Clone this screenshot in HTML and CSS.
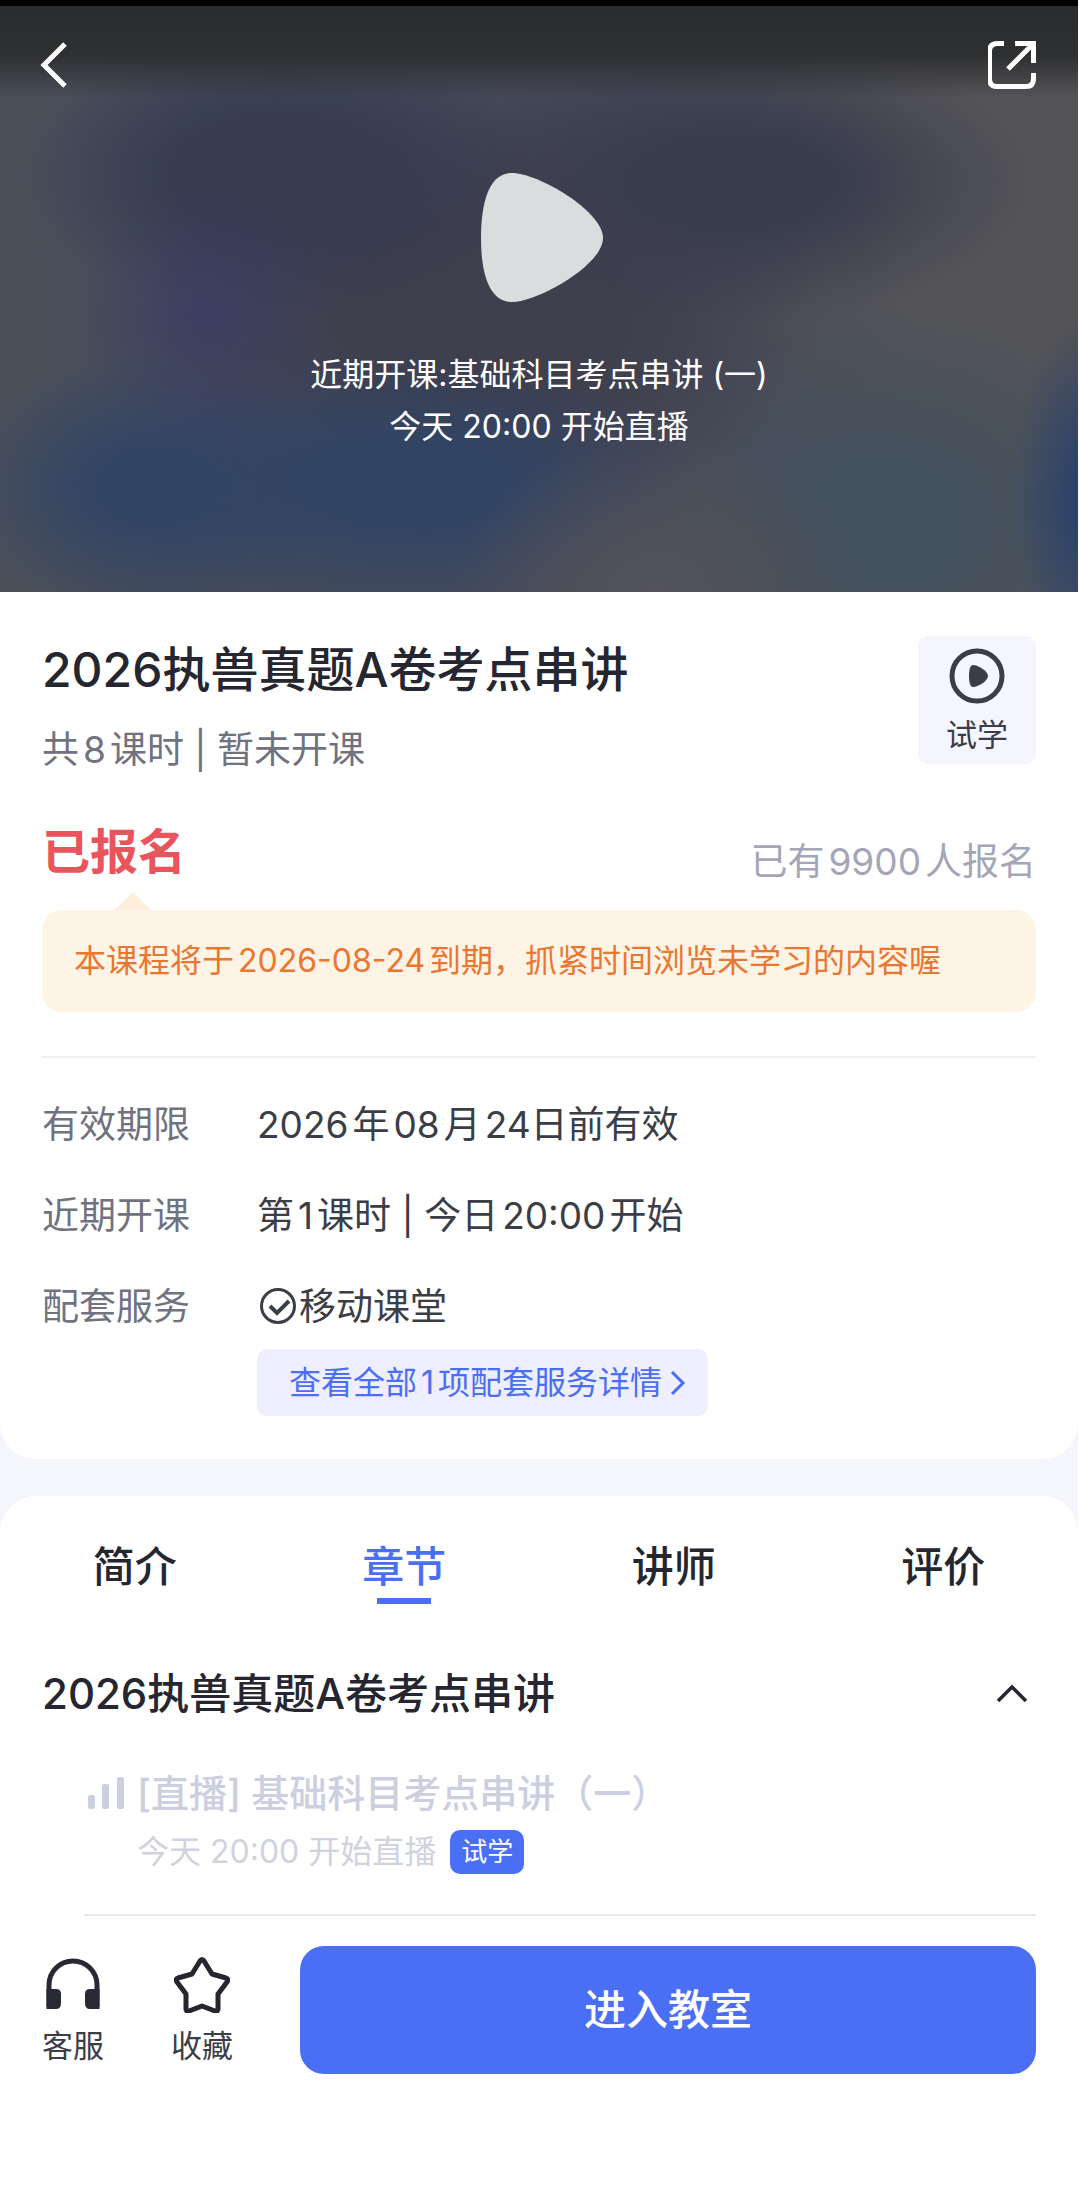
FILE: index.html
```html
<!DOCTYPE html>
<html lang="zh-CN">
<head>
<meta charset="utf-8">
<meta name="viewport" content="width=device-width, initial-scale=1">
<title>2026执兽真题A卷考点串讲</title>
<link rel="stylesheet" href="styles.css">
</head>
<body>
<div class="page">
  <header class="hero">
    <nav class="hero-nav">
      <button class="icon-button" type="button" aria-label="返回">
        <svg width="28" height="48" viewBox="0 0 28 48" fill="none" stroke="#fff" stroke-width="5"><path d="M25 3 4 24l21 21"/></svg>
      </button>
      <button class="icon-button" type="button" aria-label="分享">
        <svg width="50" height="48" viewBox="0 0 50 48" fill="none" stroke="#fff" stroke-width="5"><path d="M16 2.500h-6Q1.500 2.500 1.500 10v28q0 7.500 7.500 7.500h29q7.500 0 7.500-7.500v-6M27 2.500h18.500V22M45 3 20 28"/></svg>
      </button>
    </nav>
    <button class="icon-button play" type="button" aria-label="播放">
      <svg width="122" height="129" viewBox="0 0 122 129" fill="#dadcde"><path d="M31 0C57 0 122 38 122 65S57 129 31 129C7 129 0 98 0 65S7 0 31 0Z"/></svg>
    </button>
    <p class="hero-text">近期开课:基础科目考点串讲 (一)<br>今天 20:00 开始直播</p>
  </header>

  <main class="content">
    <section class="summary">
      <div class="summary-head">
        <div>
          <h1 class="title">2026执兽真题A卷考点串讲</h1>
          <p class="subtitle">共<span class="num">8</span>课时 | 暂未开课</p>
        </div>
        <button class="trial" type="button">
          <svg width="56" height="56" viewBox="0 0 56 56"><circle cx="28" cy="28" r="25" fill="none" stroke="#3b3d47" stroke-width="5"/><path d="M24 17c5 0 15 6 15 11s-10 11-15 11c-3 0-4-5-4-11s1-11 4-11Z" fill="#3b3d47"/></svg>
          试学
        </button>
      </div>
      <div class="status">
        <strong class="enrolled">已报名</strong>
        <span class="count">已有<span class="num">9900</span>人报名</span>
      </div>
      <p class="notice">本课程将于<span class="num">2026-08-24</span>到期，抓紧时间浏览未学习的内容喔</p>
      <dl class="details">
        <dt>有效期限</dt>
        <dd>2026<span class="num">年</span>08<span class="num">月</span>24日前有效</dd>
        <dt>近期开课</dt>
        <dd>第<span class="num">1</span>课时 | 今日<span class="num">20:00</span>开始</dd>
        <dt>配套服务</dt>
        <dd>
          <span class="service"><svg width="42" height="38" viewBox="0 0 42 38" fill="none" stroke="#3b3d47" stroke-width="3"><circle cx="21" cy="18" r="16.500"/><path d="m13 18 7 7 12-12" stroke-width="4"/></svg>移动课堂</span>
          <a class="more" href="#services"><span>查看全部<span class="num">1</span>项配套服务详情</span><svg width="16" height="26" viewBox="0 0 16 26" fill="none" stroke="#4a6ff5" stroke-width="3"><path d="m2 2 11 11L2 24"/></svg></a>
        </dd>
      </dl>
    </section>

    <section class="chapters">
      <div class="tabs" role="tablist">
        <button class="tab" type="button" role="tab">简介</button>
        <button class="tab active" type="button" role="tab" aria-selected="true">章节</button>
        <button class="tab" type="button" role="tab">讲师</button>
        <button class="tab" type="button" role="tab">评价</button>
      </div>
      <div class="chapter-head">
        <h2 class="chapter-title">2026执兽真题A卷考点串讲</h2>
        <button class="icon-button" type="button" aria-label="收起">
          <svg width="44" height="24" viewBox="0 0 44 24" fill="none" stroke="#25262f" stroke-width="3.500"><path d="m6 19 14-14 14 14"/></svg>
        </button>
      </div>
      <article class="lesson">
        <svg class="bars" width="36" height="32" viewBox="0 0 36 32" fill="#cccfe0"><rect y="18" width="7" height="14" rx="2"/><rect x="14" y="7" width="7" height="25" rx="2"/><rect x="29" width="7" height="32" rx="2"/></svg>
        <div>
          <h3 class="lesson-title">[直播] 基础科目考点串讲（一）</h3>
          <div class="lesson-meta">今天 20:00 开始直播<span class="badge">试学</span></div>
        </div>
      </article>
    </section>
  </main>

  <footer class="actions">
    <button class="action" type="button">
      <svg width="56" height="56" viewBox="0 0 56 56"><path d="M4 50V28a24 24 0 0 1 48 0v22" fill="none" stroke="#282934" stroke-width="5"/><path d="M1.500 32H11q5 0 5 5v9q0 6-5 6H1.500zM54.500 32H45q-5 0-5 5v9q0 6 5 6h9.500z" fill="#282934"/></svg>
      客服
    </button>
    <button class="action" type="button">
      <svg width="56" height="56" viewBox="0 0 56 56" fill="none" stroke="#25262f" stroke-width="5" stroke-linejoin="round"><path d="M26 4q2-3 4 0l8 13 14 4q3 1 1 4L44 37v15q0 3-3 2l-13-5-13 5q-3 1-3-2V37L3 25q-2-3 1-4l14-4Z"/></svg>
      收藏
    </button>
    <button class="enter" type="button">进入教室</button>
  </footer>
</div>
</body>
</html>
```
FILE: styles.css
```css
* {
  box-sizing: border-box;
}

body,
h1,
h2,
h3,
p,
dl,
dd {
  margin: 0;
}

body {
  background: #fff;
  color: #25262f;
  font-family: Inter, "Noto Sans CJK SC", sans-serif;
  font-size: 37px;
}

button {
  padding: 0;
  border: 0;
  background: none;
  color: inherit;
  font: inherit;
  cursor: pointer;
}

svg {
  display: block;
  flex: none;
}

.page {
  display: flex;
  flex-direction: column;
  min-height: 100vh;
  margin-right: 2px;
}

.num {
  margin: 0 4px;
}

/* Video cover */
.hero {
  display: flex;
  flex-direction: column;
  align-items: center;
  padding: 35px 40px 139px;
  border-top: 6px solid #000;
  color: #fff;
  background:
    linear-gradient(#292b2d 0, #2f3032 50px, rgb(47 48 50 / 0) 92px),
    radial-gradient(90px 190px at 102% 84%, #213c70, rgb(33 60 112 / 0)),
    radial-gradient(130px 130px at 19% 53%, rgb(58 58 102 / 70%), rgb(58 58 102 / 0)),
    radial-gradient(200px 160px at 61% 100%, #535359, rgb(83 83 89 / 0)),
    radial-gradient(280px 130px at 38% 81%, #304466 25%, rgb(48 68 102 / 0)),
    radial-gradient(190px 130px at 14% 82%, #324465 25%, rgb(50 68 101 / 0)),
    radial-gradient(260px 140px at 26% 29%, #363b50 35%, rgb(54 59 80 / 0)),
    radial-gradient(300px 140px at 68% 30%, #3a3d4e 35%, rgb(58 61 78 / 0)),
    radial-gradient(340px 240px at 45% 52%, #3f3f4d 40%, rgb(63 63 77 / 0)),
    radial-gradient(280px 220px at 82% 88%, #43505d 30%, rgb(67 80 93 / 0)),
    linear-gradient(90deg, #4a5059, #434a5b 25%, #464a5a 60%, #545457 85%);
}

.hero-nav {
  display: flex;
  justify-content: space-between;
  align-self: stretch;
}

.play {
  margin-top: 84px;
  padding-left: 6px;
}

.hero-text {
  margin-top: 47px;
  font-size: 32px;
  line-height: 52px;
  text-align: center;
}

.content {
  display: flex;
  flex-direction: column;
  gap: 37px;
  background: #f5f5fe;
}

/* Course summary */
.summary {
  padding: 44px 42px 43px;
  border-radius: 0 0 36px 36px;
  background: #fff;
}

.summary-head {
  display: flex;
  justify-content: space-between;
  align-items: flex-start;
}

.title {
  font-size: 48px;
  font-weight: 500;
  line-height: 68px;
}

.subtitle {
  margin-top: 26px;
  color: #70727f;
  line-height: 40px;
}

.trial {
  display: flex;
  flex-direction: column;
  align-items: center;
  gap: 11px;
  width: 118px;
  padding: 12px 0 9px;
  border-radius: 10px;
  background: #f4f5fe;
  color: #3b3d47;
  font-size: 31px;
  line-height: 40px;
}

.status {
  display: flex;
  justify-content: space-between;
  align-items: flex-end;
  margin-top: 52px;
}

.enrolled {
  color: #ea545c;
  font-size: 48px;
  font-weight: 700;
  line-height: 60px;
}

.count {
  color: #a4a6b8;
  line-height: 40px;
}

.notice {
  position: relative;
  margin-top: 28px;
  padding: 30px 32px;
  border-radius: 20px;
  background: #fef4e6;
  color: #ea7630;
  font-size: 32px;
  line-height: 42px;
}

.notice::before {
  content: "";
  position: absolute;
  bottom: 100%;
  left: 72px;
  width: 38px;
  height: 18px;
  background: #fdeedb;
  clip-path: polygon(50% 0, 85% 75%, 100% 100%, 0 100%, 15% 75%);
}

.details {
  display: grid;
  grid-template-columns: 215px 1fr;
  row-gap: 47px;
  margin-top: 44px;
  padding-top: 45px;
  border-top: 2px solid #f0f0f3;
  line-height: 44px;
}

.details dt {
  color: #70727f;
}

.details dd {
  color: #3b3d47;
}

.service {
  display: flex;
  align-items: center;
}

.more {
  display: inline-flex;
  align-items: center;
  gap: 8px;
  margin-top: 20px;
  padding: 12px 22px 11px 32px;
  border-radius: 10px;
  background: #eeeefe;
  color: #4a6ff5;
  font-size: 32px;
  text-decoration: none;
  vertical-align: top;
}

/* Chapters */
.chapters {
  padding-top: 47px;
  border-radius: 36px 36px 0 0;
  background: #fff;
}

.tabs {
  display: grid;
  grid-template-columns: repeat(4, 1fr);
}

.tab {
  display: flex;
  flex-direction: column;
  align-items: center;
  gap: 7px;
  font-size: 42px;
  font-weight: 500;
  line-height: 48px;
}

.tab::after {
  content: "";
  width: 54px;
  height: 6px;
}

.tab.active {
  color: #4a6ff5;
}

.tab.active::after {
  background: #4a6ff5;
}

.chapter-head {
  display: flex;
  justify-content: space-between;
  align-items: center;
  margin: 64px 42px 48px;
}

.chapter-title {
  font-size: 42px;
  font-weight: 500;
  line-height: 52px;
}

.lesson {
  display: flex;
  gap: 13px;
  margin: 0 42px 0 84px;
  padding: 0 0 40px 4px;
  border-bottom: 2px solid #e9e9ed;
}

.bars {
  margin-top: 9px;
}

.lesson-title {
  color: #cccfe0;
  font-size: 38px;
  font-weight: 500;
  line-height: 50px;
}

.lesson-meta {
  display: flex;
  align-items: center;
  gap: 14px;
  margin-top: 12px;
  color: #d0d2df;
  font-size: 32px;
  line-height: 44px;
}

.badge {
  padding: 0 11px;
  border-radius: 10px;
  background: #4a6ff5;
  color: #fff;
  font-size: 26px;
}

/* Bottom actions */
.actions {
  display: flex;
  gap: 67px;
  padding: 30px 42px 112px;
  background: #fff;
}

.action {
  display: flex;
  flex-direction: column;
  align-items: center;
  gap: 13px;
  padding-top: 11px;
  color: #3b3d47;
  font-size: 31px;
  line-height: 40px;
}

.enter {
  flex: 1;
  padding: 40px 0;
  border-radius: 24px;
  background: #4a6ff5;
  color: #fff;
  font-size: 42px;
  font-weight: 500;
  line-height: 48px;
}
```
